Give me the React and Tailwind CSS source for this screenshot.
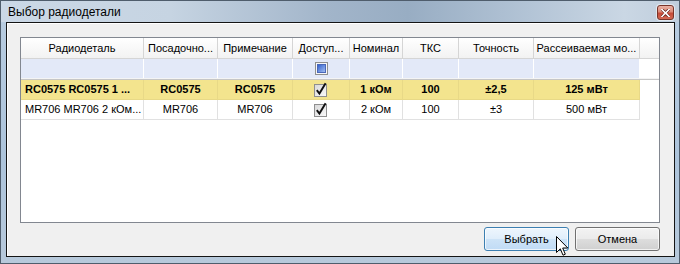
import React from "react";

const cols = [
  { w: "w-[123px]", h: "Радиодеталь" },
  { w: "w-[74px]", h: "Посадочно..." },
  { w: "w-[75px]", h: "Примечание" },
  { w: "w-[57px]", h: "Доступ..." },
  { w: "w-[53px]", h: "Номинал" },
  { w: "w-[56px]", h: "ТКС" },
  { w: "w-[75px]", h: "Точность" },
  { w: "w-[106px]", h: "Рассеиваемая мо..." },
];

const rows = [
  {
    sel: true,
    cells: ["RC0575 RC0575 1 ...", "RC0575", "RC0575", "check", "1 кОм", "100", "±2,5", "125 мВт"],
  },
  {
    sel: false,
    cells: ["MR706 MR706 2 кОм...", "MR706", "MR706", "check", "2 кОм", "100", "±3", "500 мВт"],
  },
];

function CheckBox() {
  return (
    <svg width="14" height="14" viewBox="0 0 14 14" className="overflow-visible">
      <defs>
        <linearGradient id="cbg" x1="0" y1="0" x2="1" y2="1">
          <stop offset="0" stopColor="#d8d8d8" />
          <stop offset="1" stopColor="#fafafa" />
        </linearGradient>
      </defs>
      <rect x="0.5" y="1.5" width="12" height="12" fill="url(#cbg)" stroke="#8f8f8f" />
      <path d="M2.8 7.2 L5.4 10.6 L11.6 0.2" fill="none" stroke="#111" strokeWidth="1.9" />
    </svg>
  );
}

function FilterBox() {
  return (
    <svg width="13" height="13" viewBox="0 0 13 13">
      <defs>
        <linearGradient id="fbg" x1="0" y1="0" x2="1" y2="1">
          <stop offset="0" stopColor="#2d5ccb" />
          <stop offset="1" stopColor="#a9c3f3" />
        </linearGradient>
      </defs>
      <rect x="0.5" y="0.5" width="12" height="12" fill="#f7f7f7" stroke="#8f8f8f" />
      <rect x="2.5" y="2.5" width="8" height="8" fill="url(#fbg)" stroke="#4a67b8" />
    </svg>
  );
}

export default function App() {
  return (
    <div className="relative w-[680px] h-[264px] border border-[#4f5d6c] bg-[linear-gradient(180deg,#b9cde1_0%,#adc4db_60%,#b7c9db_100%)] flex flex-col overflow-hidden font-['Liberation_Sans',Arial,sans-serif] text-black select-none">
      {/* Title bar */}
      <div className="h-[21px] flex items-start justify-between bg-[linear-gradient(90deg,#cbd8e6_0%,#c6d4e2_25%,#a2b5ca_48%,#98adc3_60%,#b3c4d6_78%,#cad7e4_92%,#bfcddc_100%)]">
        <div className="pl-[7px] pt-[3px] text-[12px] leading-[16px] text-black">Выбор радиодетали</div>
        <div className="mt-[4px] mr-[5px] w-[17px] h-[15px] rounded-[3px] border border-[#7a3429] bg-[linear-gradient(180deg,#eab1a4_0%,#dc8a79_45%,#c54a38_55%,#d36a55_100%)] flex items-center justify-center shadow-[0_0_0_1px_rgba(255,255,255,0.5)]">
          <svg width="9" height="8" viewBox="0 0 9 8">
            <path d="M1 0.5 L4.5 4 L8 0.5 M1 7.5 L4.5 4 L8 7.5" fill="none" stroke="#5a1a12" strokeWidth="3" strokeLinecap="square" />
            <path d="M1 0.5 L4.5 4 L8 0.5 M1 7.5 L4.5 4 L8 7.5" fill="none" stroke="#ffffff" strokeWidth="1.6" strokeLinecap="square" />
          </svg>
        </div>
      </div>

      {/* Client area wrapper */}
      <div className="flex-1 pl-[5px] pr-[4px] pb-[6px] flex">
        <div className="flex-1 border border-[#141414] bg-[#f0f0f0] shadow-[inset_1px_1px_0_#ffffff] pl-[13px] pr-[14px] pt-[14px] pb-[5px] flex flex-col">
          {/* Grid */}
          <div className="h-[186px] border border-[#828790] bg-white flex flex-col text-[11px]">
            {/* Header */}
            <div className="h-[21px] flex border-b border-[#d5d5d5] bg-linear-to-b from-white to-[#f2f2f2]">
              {cols.map((c, i) => (
                <div
                  key={i}
                  className={`${c.w} shrink-0 border-r border-[#d5d5d5] flex items-center justify-center whitespace-nowrap overflow-hidden`}
                >
                  {c.h}
                </div>
              ))}
              <div className="flex-1" />
            </div>
            {/* Filter row */}
            <div className="h-[19px] flex">
              {cols.map((c, i) => (
                <div
                  key={i}
                  className={`${c.w} shrink-0 border-r border-white bg-[#e3e9f8] flex items-center justify-center`}
                >
                  {i === 3 ? <FilterBox /> : null}
                </div>
              ))}
              <div className="flex-1 bg-white" />
            </div>
            <div className="h-[1px] bg-[#f4f4f4]" />
            <div className="h-[1px] bg-[#c6c6c6]" />
            {/* Data rows */}
            {rows.map((r, ri) => (
              <div key={ri} className="h-[20px] flex">
                {r.cells.map((v, i) => (
                  <div
                    key={i}
                    className={`${cols[i].w} shrink-0 border-r border-b flex items-center whitespace-nowrap overflow-hidden ${
                      r.sel ? "bg-[#f3e48e] border-[#e8d987] font-bold" : "bg-white border-[#e1e1e1]"
                    } ${i === 0 ? "justify-start pl-[4px]" : "justify-center"}`}
                  >
                    {v === "check" ? <CheckBox /> : v}
                  </div>
                ))}
                <div className="flex-1" />
              </div>
            ))}
            <div className="flex-1" />
          </div>

          {/* Buttons */}
          <div className="mt-[4px] flex justify-end gap-[6px] text-[11px]">
            <div className="w-[85px] h-[24px] rounded-[3px] border border-[#3c7fb1] bg-[linear-gradient(180deg,#eef6fd_0%,#e0eefb_48%,#cde3f7_52%,#c0dbf5_100%)] shadow-[inset_0_0_0_1px_rgba(255,255,255,0.7)] flex items-center justify-center">
              Выбрать
            </div>
            <div className="w-[85px] h-[24px] rounded-[3px] border border-[#707070] bg-[linear-gradient(180deg,#f3f3f3_0%,#ebebeb_48%,#dddddd_52%,#d0d0d0_100%)] shadow-[inset_0_0_0_1px_rgba(255,255,255,0.7)] flex items-center justify-center">
              Отмена
            </div>
          </div>
        </div>
      </div>

      {/* Mouse cursor */}
      <svg
        className="absolute left-[555px] top-[235px]"
        width="13"
        height="21"
        viewBox="0 0 13 21"
      >
        <path
          d="M0.5 0.5 L0.5 16.5 L4.3 12.8 L7 19.2 L9.3 18.2 L6.7 12 L11.8 12 Z"
          fill="#ffffff"
          stroke="#000000"
          strokeWidth="1"
          strokeLinejoin="miter"
        />
      </svg>
    </div>
  );
}
